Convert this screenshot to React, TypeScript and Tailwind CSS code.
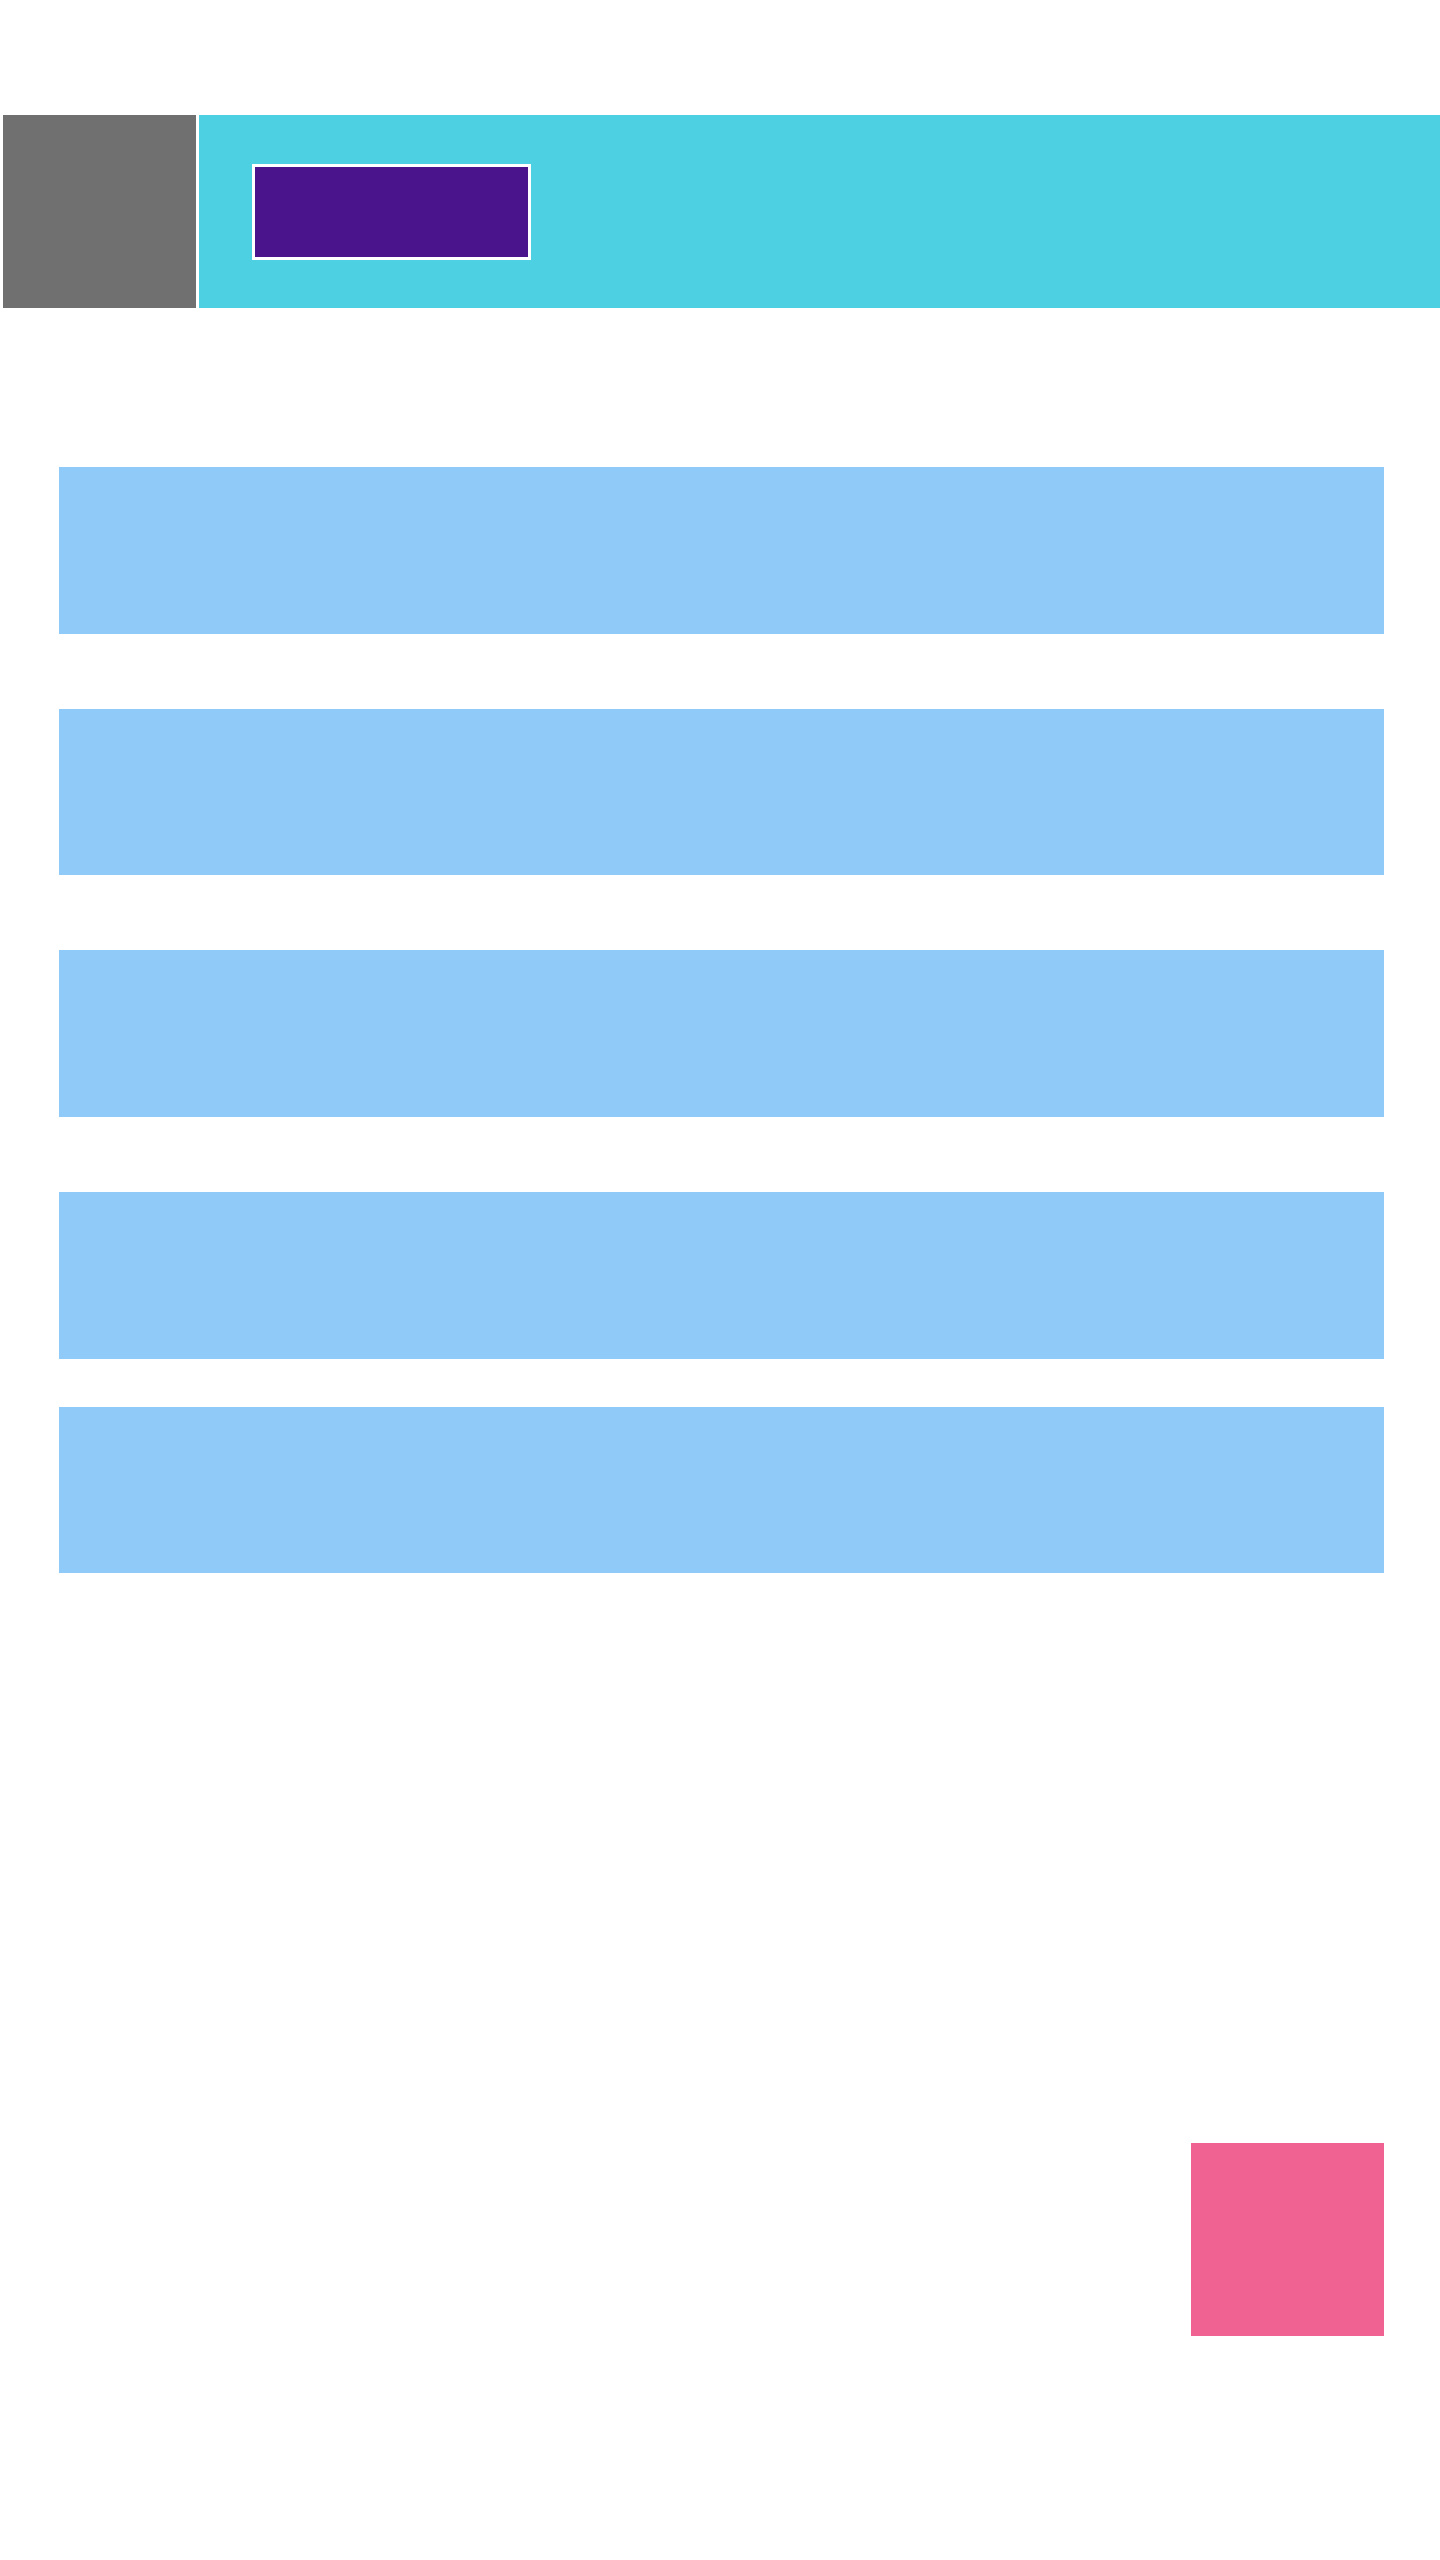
const panels = [
    { id: 'p1', gap: 'mb-[75px]' },
    { id: 'p2', gap: 'mb-[75px]' },
    { id: 'p3', gap: 'mb-[75px]' },
    { id: 'p4', gap: 'mb-[48px]' },
    { id: 'p5', gap: '' },
]

function Header() {
    return (
        <div className="flex gap-[3px] pl-[3px] pt-[115px]">
            <div className="w-[193px] h-[193px] bg-[#707070]"></div>
            <div className="flex-1 h-[193px] bg-[#4dd0e1] flex items-center pl-[53px]">
                <div className="w-[279px] h-[96px] border-[3px] border-white bg-[#4a148c]"></div>
            </div>
        </div>
    )
}

export default function App() {
    return (
        <div className="w-[1440px] min-h-[2560px] bg-white font-['Liberation_Sans',sans-serif]">
            <Header />
            <div className="flex flex-col pl-[59px] pt-[159px] w-[1384px]">
                {panels.map((p) => (
                    <div key={p.id} className={`h-[166.7px] bg-[#90caf9] ${p.gap}`}></div>
                ))}
                <div className="flex justify-end mt-[570px]">
                    <div className="w-[193px] h-[193px] bg-[#f06292]"></div>
                </div>
            </div>
        </div>
    )
}
